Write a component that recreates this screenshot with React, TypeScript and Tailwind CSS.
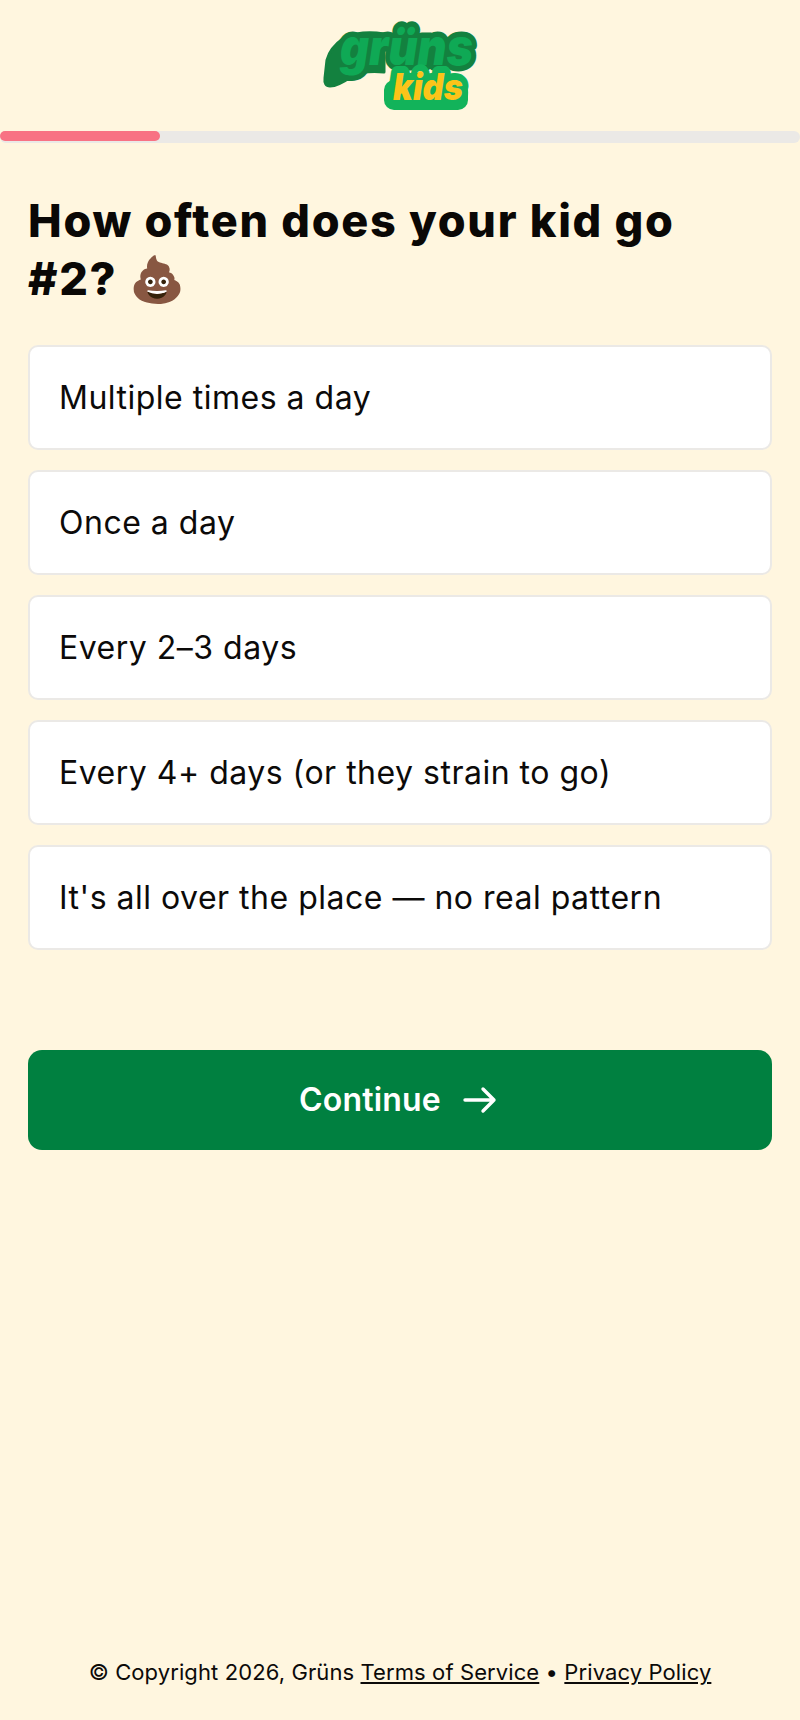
const options = [
  "Multiple times a day",
  "Once a day",
  "Every 2–3 days",
  "Every 4+ days (or they strain to go)",
  "It's all over the place — no real pattern",
];

function Logo() {
  return (
    <svg width="156" height="96" viewBox="0 0 156 96" className="overflow-visible" aria-label="Grüns Kids">
      <path
        d="M5 42 Q8 30 22 20 Q40 12 62 16 L62 54 Q42 52 30 58 Q16 68 8 68 Q2 68 3 60 Z"
        fill="#13813f"
        stroke="#13813f"
        strokeWidth="3"
        strokeLinejoin="round"
      />
      <g fontFamily="Inter, sans-serif" fontWeight="900" fontStyle="italic" strokeLinejoin="round" paintOrder="stroke">
        <text x="18" y="47" fontSize="50" textLength="133" lengthAdjust="spacingAndGlyphs" fill="#0fa955" stroke="#13813f" strokeWidth="11">
          grüns
        </text>
        <rect x="62" y="62" width="84" height="30" rx="10" fill="#12b35a" />
        <text x="71" y="82" fontSize="37" textLength="70" lengthAdjust="spacingAndGlyphs" fill="#fcc419" stroke="#12b35a" strokeWidth="14">
          kids
        </text>
      </g>
    </svg>
  );
}

export default function App() {
  return (
    <div className="flex flex-col h-[1720px] bg-[#fff6df] text-[#0c0a09] font-['Inter',sans-serif]">
      <header className="flex justify-center h-[131px] pt-[18px]">
        <Logo />
      </header>
      <div className="h-3 bg-[#ebe9e6] rounded-full">
        <div className="h-[10px] w-[160px] bg-[#f87283] rounded-full" />
      </div>
      <main className="flex flex-col px-7 pt-[49px]">
        <h1 className="text-[45px] leading-[58px] font-extrabold tracking-[1.7px] text-[#0a0806]">
          How often does your kid go #2? 💩
        </h1>
        <div className="flex flex-col gap-[20px] mt-[37px]">
          {options.map((o) => (
            <button
              key={o}
              className="h-[105px] px-[29px] text-left text-[32px] tracking-[0.5px] bg-white border-2 border-[#ebe9e6] rounded-[10px]"
            >
              {o}
            </button>
          ))}
        </div>
        <button className="flex items-center justify-center gap-[22px] h-[100px] mt-[100px] pr-1 bg-[#008040] text-white text-[32px] font-semibold tracking-[0.2px] rounded-[14px]">
          Continue
          <svg width="34" height="28" viewBox="0 0 34 28" fill="none" stroke="currentColor" strokeWidth="3.4" strokeLinecap="round" strokeLinejoin="round">
            <path d="M2 14 H31 M20 3 L31 14 L20 25" />
          </svg>
        </button>
      </main>
      <footer className="mt-auto pb-[32px] text-center text-[22px] leading-[32px] tracking-[0.1px]">
        © Copyright 2026, Grüns <a className="underline">Terms of Service</a> • <a className="underline">Privacy Policy</a>
      </footer>
    </div>
  );
}
